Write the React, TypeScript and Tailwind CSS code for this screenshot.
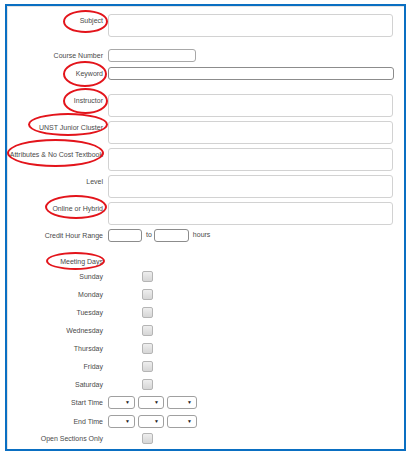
import React from "react";

const font = { fontFamily: '"Liberation Sans", Arial, sans-serif' };

function Label({ children, top = false }: { children: React.ReactNode; top?: boolean }) {
  return (
    <div
      className={`w-[95px] shrink-0 whitespace-nowrap text-right text-[7px] leading-[10px] text-[#4a4a4a] ${top ? "pt-[2px]" : ""}`}
    >
      {children}
    </div>
  );
}

function Area() {
  return <div className="h-[23px] w-[285px] rounded-[3px] border border-[#d2d2d2] bg-white" />;
}

function Box() {
  return <div className="h-[11px] w-[11px] rounded-[2px] border border-[#b5b5b5] bg-gradient-to-b from-[#eeeeee] to-[#d6d6d6]" />;
}

function Sel({ w }: { w: string }) {
  return (
    <div className={`flex h-[13px] ${w} items-center justify-end rounded-[3px] border border-[#a0a0a0] bg-white pr-[4px]`}>
      <span className="text-[5px] leading-none text-[#222]">▼</span>
    </div>
  );
}

const days = ["Sunday", "Monday", "Tuesday", "Wednesday", "Thursday", "Friday", "Saturday"];

const rings = [
  "left-[63px] top-[10px] h-[23px] w-[45px]",
  "left-[63px] top-[61px] h-[26px] w-[44px]",
  "left-[63px] top-[88px] h-[26px] w-[45px]",
  "left-[28px] top-[113px] h-[23px] w-[80px]",
  "left-[7px] top-[139px] h-[28px] w-[97px]",
  "left-[45px] top-[195px] h-[24px] w-[62px]",
  "left-[46px] top-[252px] h-[18px] w-[59px]",
];

export default function App() {
  return (
    <div className="relative h-[459px] w-[412px] bg-white pl-[5px] pt-[4px]" style={font}>
      <div className="h-[447px] w-[401px] border-2 border-[#0a6fc2]">
        <div className="h-full w-full border-l border-t border-[#e4e4e4] pt-[7px]">
          <div className="flex flex-col">
            <div className="flex gap-[5px]">
              <Label top>Subject</Label>
              <Area />
            </div>
            <div className="mt-[12px] flex items-center gap-[5px]">
              <Label>Course Number</Label>
              <div className="h-[13px] w-[88px] rounded-[3px] border border-[#a8a8a8] bg-white" />
            </div>
            <div className="mt-[5px] flex items-center gap-[5px]">
              <Label>Keyword</Label>
              <div className="h-[13px] w-[286px] rounded-[3px] border border-[#8c8c8c] bg-white" />
            </div>
            <div className="mt-[14px] flex gap-[5px]">
              <Label top>Instructor</Label>
              <Area />
            </div>
            <div className="mt-[4px] flex gap-[5px]">
              <Label top>UNST Junior Cluster</Label>
              <Area />
            </div>
            <div className="mt-[4px] flex gap-[5px]">
              <Label top>Attributes &amp; No Cost Textbook</Label>
              <Area />
            </div>
            <div className="mt-[4px] flex gap-[5px]">
              <Label top>Level</Label>
              <Area />
            </div>
            <div className="mt-[4px] flex gap-[5px]">
              <Label top>Online or Hybrid</Label>
              <Area />
            </div>
            <div className="mt-[4px] flex items-center gap-[4px]">
              <div className="mr-[1px]">
                <Label>Credit Hour Range</Label>
              </div>
              <div className="h-[13px] w-[34px] rounded-[3px] border border-[#8c8c8c] bg-white" />
              <span className="text-[7px] text-[#4a4a4a]">to</span>
              <div className="-ml-[2px] h-[13px] w-[35px] rounded-[3px] border border-[#8c8c8c] bg-white" />
              <span className="text-[7px] text-[#4a4a4a]">hours</span>
            </div>
            <div className="mt-[15px] flex gap-[5px]">
              <Label>Meeting Days</Label>
            </div>
            <div className="mt-[4px] flex flex-col gap-[7px]">
              {days.map((d) => (
                <div key={d} className="flex items-center gap-[5px]">
                  <Label>{d}</Label>
                  <div className="pl-[34px]">
                    <Box />
                  </div>
                </div>
              ))}
            </div>
            <div className="mt-[6px] flex items-center gap-[5px]">
              <Label>Start Time</Label>
              <div className="flex gap-[3px]">
                <Sel w="w-[27px]" />
                <Sel w="w-[26px]" />
                <Sel w="w-[30px]" />
              </div>
            </div>
            <div className="mt-[6px] flex items-center gap-[5px]">
              <Label>End Time</Label>
              <div className="flex gap-[3px]">
                <Sel w="w-[27px]" />
                <Sel w="w-[26px]" />
                <Sel w="w-[30px]" />
              </div>
            </div>
            <div className="mt-[5px] flex items-center gap-[5px]">
              <Label>Open Sections Only</Label>
              <div className="pl-[34px]">
                <Box />
              </div>
            </div>
          </div>
        </div>
      </div>
      {rings.map((r, i) => (
        <div
          key={i}
          className={`pointer-events-none absolute rounded-[50%] border-2 border-[#e3141b] ${r}`}
        />
      ))}
    </div>
  );
}
